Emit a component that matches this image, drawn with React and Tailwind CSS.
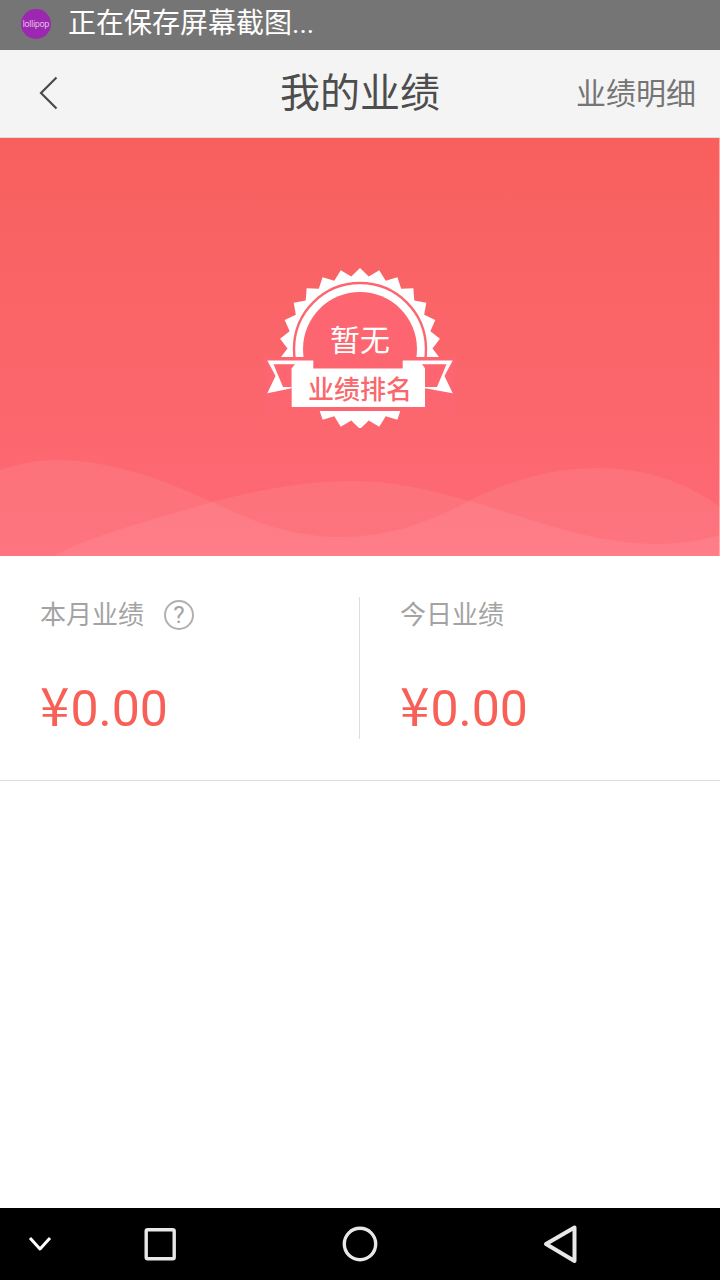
const CJK = '"Roboto","Noto Sans CJK SC",sans-serif';
const RED = "#fd6670";

function spikes(cx, cy, rOut, rIn, n) {
  const pts = [];
  for (let i = 0; i < n * 2; i++) {
    const a = (Math.PI * i) / n - Math.PI / 2;
    const r = i % 2 === 0 ? rOut : rIn;
    pts.push(`${(cx + r * Math.cos(a)).toFixed(2)},${(cy + r * Math.sin(a)).toFixed(2)}`);
  }
  return pts.join(" ");
}

function Badge() {
  return (
    <svg width="190" height="160" viewBox="0 0 190 160" className="block">
      <defs>
        <clipPath id="lower">
          <rect x="54" y="143" width="82" height="17" />
        </clipPath>
      </defs>
      <polygon points={spikes(95, 80.5, 80.5, 72.5, 26)} fill="#fff" />
      <circle cx="95" cy="81" r="66" fill="none" stroke={RED} strokeWidth="2.4" />
      <circle cx="95" cy="81" r="57" fill={RED} />
      <rect x="0" y="89" width="190" height="54" fill={RED} />
      <polygon points={spikes(95, 77.5, 80, 71, 26)} fill="#fff" clipPath="url(#lower)" />
      <polygon points="2.3,92.500 48.3,92.500 48.3,101 26.7,101 26.7,120.300 2.3,125.300 10.500,108" fill="#fff" />
      <polygon points="187.700,92.500 137.700,92.500 137.700,101 160,101 160,120.300 187.700,125.300 179.500,108" fill="#fff" />
      <polygon points="8.500,96.300 30,96.300 26.700,100.300 26.700,119 18,119" fill={RED} />
      <polygon points="181.500,96.300 157,96.300 160,100.300 160,119 172,119" fill={RED} />
      <rect x="26.700" y="100.500" width="133.300" height="38.500" fill="#fff" />
    </svg>
  );
}

function Stat({ label, help, pad }) {
  return (
    <div className={`w-[360px] h-[142px] ${pad} flex flex-col`}>
      <div className="flex items-center h-[34px] mt-[1px] text-[26px] leading-[34px] text-[#a3a3a3]">
        <span>{label}</span>
        {help && (
          <span className="ml-[20px] w-[30px] h-[30px] rounded-full border-2 border-[#b0b0b0] flex items-center justify-center text-[24px] leading-none text-[#a3a3a3]">
            ?
          </span>
        )}
      </div>
      <div className="mt-[42px] text-[50px] leading-[58px] text-[#f75f57]">
        <span className="font-['Noto_Sans_CJK_SC'] text-[53px] mr-[1px]">¥</span>0.00
      </div>
    </div>
  );
}

export default function App() {
  return (
    <div className="w-[720px] h-[1280px] flex flex-col bg-white overflow-hidden" style={{ fontFamily: CJK }}>
      <div className="h-[50px] bg-[#757575] flex items-center pl-[21px] pb-[2px] shrink-0">
        <div className="w-[30px] h-[30px] rounded-full bg-[#9c27b0] flex items-center justify-center text-[8.5px] leading-none font-light text-white">
          lollipop
        </div>
        <span className="ml-[17px] text-[28px] leading-[34px] text-white">正在保存屏幕截图...</span>
      </div>

      <div className="h-[88px] bg-[#f4f4f4] border-b border-[#dedede] flex items-center justify-between relative shrink-0">
        <svg width="20" height="34" viewBox="0 0 20 34" className="ml-[39px] mb-[1px]" fill="none">
          <path d="M17.5 1.5 2 17l15.5 15.5" stroke="#4a4a4a" strokeWidth="2.2" />
        </svg>
        <span className="absolute left-0 right-0 text-center text-[40px] leading-[48px] text-[#4d4d4d]">我的业绩</span>
        <span className="mr-[24px] text-[30px] leading-[38px] text-[#757575]">业绩明细</span>
      </div>

      <div className="h-[418px] relative shrink-0 bg-gradient-to-b from-[#f7605d] to-[#fe6a76] flex justify-center overflow-hidden">
        <svg width="720" height="96" viewBox="0 0 720 96" className="absolute left-0 bottom-0" fill="none">
          <path d="M0 10C20 3 38 0 57 0c53 0 108 20 155 42 43 20 78 35 128 35s90-15 129-36C515 18 555 8 597 8c53 0 93 17 123 39v49H0Z" fill="#ffffff" fillOpacity=".07" />
          <path d="M53 96c47-24 107-38 159-54 53-14 98-21 141-21 42 0 77 9 116 20 61 17 121 43 188 43 23 0 43-3 63-9v21Z" fill="#ffffff" fillOpacity=".07" />
        </svg>
        <div className="absolute right-0 top-0 bottom-0 w-px bg-[#ffa9a9]" />
        <div className="relative mt-[130px] w-[190px] h-[160px]">
          <Badge />
          <span className="absolute left-0 right-0 top-[54px] text-center text-[30px] leading-[38px] text-white">暂无</span>
          <span className="absolute left-0 right-0 top-[105px] text-center text-[26px] leading-[34px] font-medium text-[#f9686c]">业绩排名</span>
        </div>
      </div>

      <div className="h-[225px] border-b border-[#dddddd] flex items-start pt-[41px] shrink-0">
        <Stat label="本月业绩" help pad="pl-[40px] border-r border-[#dddddd]" />
        <Stat label="今日业绩" pad="pl-[40px]" />
      </div>

      <div className="flex-1" />

      <div className="h-[72px] bg-black shrink-0">
        <svg width="720" height="72" viewBox="0 0 720 72" fill="none" stroke="#e8e8e8" strokeWidth="3.4" strokeLinejoin="round" className="block">
          <path d="M30 30 40 41 50 30" strokeWidth="3" stroke="#fff" />
          <rect x="146.200" y="21.700" width="28" height="29" rx="1.500" />
          <circle cx="360" cy="36" r="15.700" />
          <path d="M574.500 19.500v33.500L546 36Z" strokeWidth="4" />
        </svg>
      </div>
    </div>
  );
}
